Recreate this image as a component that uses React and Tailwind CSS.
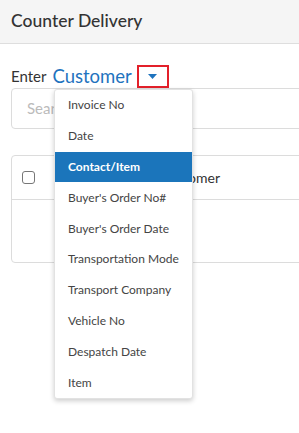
import React from "react";

const options = [
  "Invoice No",
  "Date",
  "Contact/Item",
  "Buyer's Order No#",
  "Buyer's Order Date",
  "Transportation Mode",
  "Transport Company",
  "Vehicle No",
  "Despatch Date",
  "Item",
];

export default function App() {
  const selected = "Contact/Item";

  return (
    <div className="w-[299px] h-[433px] overflow-hidden bg-white font-['Lato',sans-serif] text-[#333]">
      {/* Header */}
      <div className="h-[44px] bg-[#f5f5f5] border-b border-[#dedede] flex items-center px-[11px]">
        <h1 className="text-[17.5px] font-medium text-[#333]">Counter Delivery</h1>
      </div>

      <div className="relative pl-[11px] pt-[20px]">
        {/* Enter Customer */}
        <div className="flex items-center h-[24px]">
          <span className="text-[15px] text-[#333]">Enter</span>
          <span className="ml-[6px] text-[18.5px] text-[#1e73be] leading-none">Customer</span>
          <span className="ml-[5px] w-[32px] h-[23px] border-2 border-[#e3202a] flex items-center justify-center">
            <svg width="9" height="5" viewBox="0 0 9 5">
              <path d="M0 0h9L4.5 5z" fill="#1e73be" />
            </svg>
          </span>
        </div>

        {/* Search input */}
        <div className="h-[41px] w-[320px] border border-[#dcdcdc] rounded-[4px] flex items-center pl-[15px]">
          <span className="text-[15px] text-[#bbb]">Search</span>
        </div>

        {/* Table card */}
        <div className="mt-[26px] w-[320px] h-[108px] border border-[#dcdcdc] rounded-[4px]">
          <div className="h-[44px] border-b border-[#dcdcdc] flex items-center pl-[10px]">
            <span className="w-[13px] h-[13px] border border-[#777] rounded-[3px]"></span>
            <span className="ml-[125px] text-[14px] text-[#333]">Customer</span>
          </div>
        </div>

        {/* Dropdown */}
        <div className="absolute left-[54px] top-[45px] w-[139px] bg-white border border-[#e2e2e2] rounded-[3px] shadow-[0_2px_5px_rgba(0,0,0,0.2)]">
          {options.map((o) => (
            <div
              key={o}
              className={
                o === selected
                  ? "h-[30.8px] flex items-center pl-[13px] text-[12px] font-bold text-white bg-[#1b75bb]"
                  : "h-[30.8px] flex items-center pl-[13px] text-[12px] text-[#444]"
              }
            >
              {o}
            </div>
          ))}
        </div>
      </div>
    </div>
  );
}
